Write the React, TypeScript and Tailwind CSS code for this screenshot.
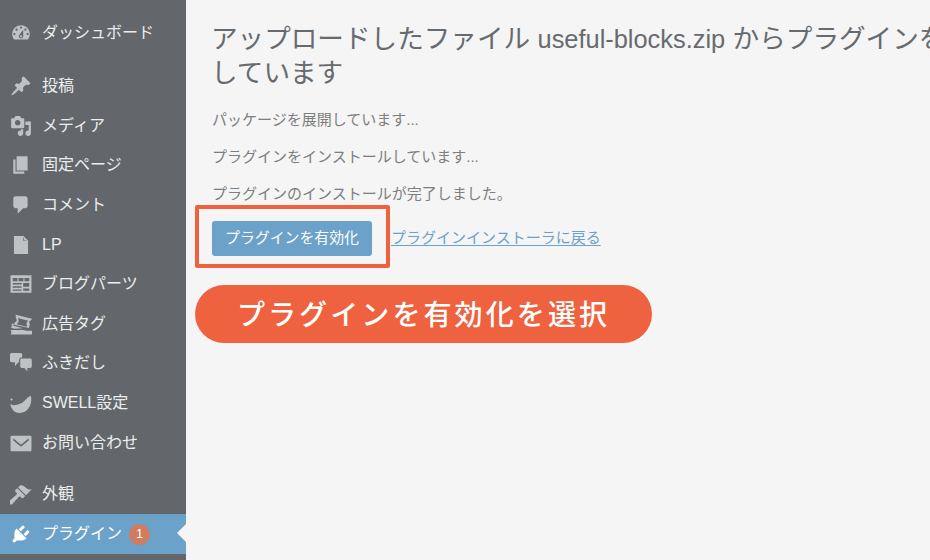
const jpFont = "font-['Liberation_Sans','Noto_Sans_CJK_JP',sans-serif]";

const icons: Record<string, React.ReactNode> = {
  dashboard: (
    <path d="M3.76 16h12.48c1.1-1.37 1.76-3.11 1.76-5 0-4.42-3.58-8-8-8s-8 3.58-8 8c0 1.89.66 3.63 1.76 5zM10 4c.55 0 1 .45 1 1s-.45 1-1 1-1-.45-1-1 .45-1 1-1zM6 6c.55 0 1 .45 1 1s-.45 1-1 1-1-.45-1-1 .45-1 1-1zm8 0c.55 0 1 .45 1 1s-.45 1-1 1-1-.45-1-1 .45-1 1-1zm-5.37 5.55L12 7v6c0 1.1-.9 2-2 2s-2-.9-2-2c0-.57.24-1.08.63-1.45zM4 10c.55 0 1 .45 1 1s-.45 1-1 1-1-.45-1-1 .45-1 1-1zm12 0c.55 0 1 .45 1 1s-.45 1-1 1-1-.45-1-1 .45-1 1-1zm-5 3c0-.55-.45-1-1-1s-1 .45-1 1 .45 1 1 1 1-.45 1-1z" />
  ),
  post: (
    <path d="M10.44 3.02l1.82-1.82 6.36 6.35-1.83 1.82c-1.05-.68-2.48-.57-3.41.36l-.75.75c-.92.93-1.04 2.35-.35 3.41l-1.83 1.82-2.41-2.41-2.8 2.79c-.42.42-3.38 2.71-3.8 2.29s1.86-3.39 2.28-3.81l2.79-2.79L4.1 9.36l1.83-1.82c1.05.69 2.48.57 3.4-.36l.75-.75c.93-.92 1.05-2.35.36-3.41z" />
  ),
  media: (
    <path d="M13 11V4c0-.55-.45-1-1-1h-1.67L9 1H5L3.67 3H2c-.55 0-1 .45-1 1v7c0 .55.45 1 1 1h10c.55 0 1-.45 1-1zM7 4.5c1.38 0 2.5 1.12 2.5 2.5S8.38 9.5 7 9.5 4.5 8.38 4.5 7 5.62 4.5 7 4.5zM14 6h5v10.5c0 1.38-1.12 2.5-2.5 2.5S14 17.88 14 16.5s1.12-2.5 2.5-2.5c.17 0 .34.02.5.05V9h-3V6zm-4 8.05V13h2v3.5c0 1.38-1.12 2.5-2.5 2.5S7 17.88 7 16.5 8.12 14 9.5 14c.17 0 .34.02.5.05z" />
  ),
  page: <path d="M6 15V2h10v13H6zm-1 1h8v2H3V5h2v11z" />,
  comment: (
    <path d="M5 2h9c1.1 0 2 .9 2 2v7c0 1.1-.9 2-2 2h-2l-5 5v-5H5c-1.1 0-2-.9-2-2V4c0-1.1.9-2 2-2z" />
  ),
  doc: <path fillRule="evenodd" d="M3.600 1.800h8.600l4.200 4.200v12.200H3.600V1.800zm8.400 1.200v3.200h3.200l-.6-.6H12.600V3.600z" />,
  parts: (
    <path
      fillRule="evenodd"
      d="M.5 2h19v16H.5V2zm2 2.500v3h4.300v-3H2.500zm5.300 0v3h4.400v-3H7.800zm5.400 0v3h4.300v-3h-4.300zM2.500 9v1.500h8V9h-8zm0 3v1.500h8V12h-8zm0 3v1.200h8V15h-8zm9.500-6v3.500h5.500V9H12zm0 5v2.200h5.500V14H12z"
    />
  ),
  ticket: (
    <>
      <path
        fillRule="evenodd"
        d="M5.200 1.500l14.800 3.700-.8 1.300c-.9.100-1.500.6-1.700 1.400-.2.800 0 1.500.6 2.100l-.9 3.700L3.700 10.700l.6-2.300c.8-.1 1.500-.6 1.700-1.500.2-.8-.1-1.500-.7-2.100l-.1-3.300zm2 3l.2 1c.4.800.6 1.500.3 2.500-.2.900-.8 1.600-1.600 1.900l-.1.300 9.200 2.300.2-.8c-.4-.8-.5-1.600-.3-2.500.2-.9.700-1.600 1.400-1.900l.1-.3-9.600-2.500z"
      />
      <path d="M1.500 9.500l2 .5-.4 1.600 8.500 2.300-7.500.4-3.400-.9c.5-.3.800-.8.900-1.400.1-.5.100-1-.1-1.500zM.5 15.500h11.500l3 .6 5 0v3.400H.5c.5-.5.7-1.100.7-1.900 0-.8-.2-1.500-.7-2.100z" />
    </>
  ),
  bubbles: (
    <>
      <path d="M1.500.800h8c.9 0 1.500.6 1.500 1.500v5.500c0 .9-.6 1.500-1.500 1.500H7.500L4.500 13V9.300h-3C.6 9.300 0 8.700 0 7.800V2.300C0 1.400.6.800 1.500.800z" />
      <path
        stroke="#63676b"
        strokeWidth="1"
        d="M10.500 5.500h8c.9 0 1.800.8 1.800 1.700v6c0 .9-.9 1.800-1.800 1.800h-2.200v4l-3.500-4h-2.300c-.9 0-1.700-.9-1.700-1.800v-6c0-.9.800-1.700 1.700-1.700z"
      />
    </>
  ),
  swell: (
    <>
      <path d="M19 3.500C20.500 10 17 19 9 19 4.500 19 1 16 .3 10.800c2 1.300 4 1.500 6 .8 2.300-.8 3.500-.7 5.200-2 3-2.300 4-4.800 7.500-6.100z" />
      <circle cx="1.400" cy="6.800" r="1" />
    </>
  ),
  mail: (
    <path
      fillRule="evenodd"
      d="M1.500 3.500h17c.5 0 1 .5 1 1v12c0 .5-.5 1-1 1h-17c-.5 0-1-.5-1-1v-12c0-.5.5-1 1-1zM3 5.700l7 5.800 7-5.800v2l-7 5.800-7-5.800v-2z"
    />
  ),
  appearance: (
    <path d="M14.480 11.060L7.410 3.990l1.500-1.500c.5-.56 2.300-.47 3.510.32 1.210.8 1.430 1.280 2.910 2.100 1.180.64 2.450 1.260 4.450.85zm-.71.71L6.700 4.700 4.930 6.470c-.39.39-.39 1.020 0 1.410l1.060 1.060c.39.39.39 1.030 0 1.420-.6.6-6.480 5.820-6.480 5.820-.78.7-.78 2.050 0 2.830.78.78 2.130.78 2.830 0 0 0 5.220-5.880 5.820-6.480.39-.39 1.030-.39 1.420 0l1.060 1.060c.39.39 1.020.39 1.410 0z" />
  ),
  plugin: (
    <path d="M13.110 4.360L9.870 7.600 8 5.730l3.240-3.240c.35-.34 1.050-.2 1.560.32.52.51.66 1.210.31 1.550zm-8 1.770l.91-1.120 9.010 9.010-1.190.84c-.71.71-2.630 1.160-3.820 1.160H6.140L4.900 17.260c-.59.59-1.540.59-2.120 0-.59-.58-.59-1.530 0-2.120l1.240-1.240v-3.880c0-1.130.4-3.190 1.090-3.890zm7.260 3.970l3.240-3.240c.34-.35 1.040-.21 1.550.31.52.51.66 1.210.31 1.550l-3.240 3.250z" />
  ),
};

const topItems = [{ icon: "dashboard", label: "ダッシュボード" }];

const contentItems = [
  { icon: "post", label: "投稿" },
  { icon: "media", label: "メディア" },
  { icon: "page", label: "固定ページ" },
  { icon: "comment", label: "コメント" },
  { icon: "doc", label: "LP" },
  { icon: "parts", label: "ブログパーツ" },
  { icon: "ticket", label: "広告タグ" },
  { icon: "bubbles", label: "ふきだし" },
  { icon: "swell", label: "SWELL設定" },
  { icon: "mail", label: "お問い合わせ" },
];

const MenuRow = ({ icon, label }: { icon: string; label: string }) => (
  <div className="flex h-[39.6px] items-center text-[#eceded]">
    <span className="flex w-[42px] justify-center">
      <svg viewBox="0 0 20 20" className="h-[22px] w-[22px] fill-[#bfc2c5]">
        {icons[icon]}
      </svg>
    </span>
    <span className="text-[16px]">{label}</span>
  </div>
);

const Sidebar = () => (
  <aside className="flex h-full w-[186px] shrink-0 flex-col bg-[#63676b] pt-[13.5px]">
    <div className="mb-[13.4px]">
      {topItems.map((item) => (
        <MenuRow key={item.label} icon={item.icon} label={item.label} />
      ))}
    </div>
    <div className="mb-[12.2px]">
      {contentItems.map((item) => (
        <MenuRow key={item.label} icon={item.icon} label={item.label} />
      ))}
    </div>
    <MenuRow icon="appearance" label="外観" />
    {/* current item */}
    <div className="relative flex h-[39.6px] items-center bg-[#6ca2ca] text-white">
      <span className="flex w-[42px] justify-center">
        <svg viewBox="0 0 20 20" className="h-[22px] w-[22px] fill-white">
          {icons.plugin}
        </svg>
      </span>
      <span className="text-[16px]">プラグイン</span>
      <span className="ml-[7px] flex h-[21px] w-[21px] items-center justify-center rounded-full bg-[#d17b5f] text-[12px]">
        1
      </span>
      <span className="absolute right-0 top-[10px] h-0 w-0 border-y-[9px] border-r-[9px] border-y-transparent border-r-[#f5f5f5]" />
    </div>
  </aside>
);

export default function App() {
  return (
    <div className={`flex h-[560px] w-[930px] overflow-hidden bg-[#f5f5f5] ${jpFont}`}>
      <Sidebar />
      <main className="min-w-0 flex-1 pl-[9px]">
        <div className="pl-[17px]">
          <h1 className="-ml-px pt-[22px] whitespace-nowrap text-[26.6px] leading-[34px] text-[#676b6f]">
            アップロードしたファイル <span className="text-[25.4px]">useful-blocks.zip</span> からプラグインをインストール
            <br />
            しています
          </h1>
          <div className="mt-[19px] flex flex-col gap-[16px] text-[15px] leading-[21px] text-[#7c7e80]">
            <p>パッケージを展開しています...</p>
            <p>プラグインをインストールしています...</p>
            <p>プラグインのインストールが完了しました。</p>
          </div>
        </div>
        <div className="mt-px flex items-center">
          <div className="h-[63px] w-[195px] rounded-[2px] border-[4px] border-[#ee6240] pl-[13px] pt-[12px]">
            <button className="flex h-[35px] w-[160px] items-center justify-center rounded-[3px] bg-[#6ca2ca] text-[14.9px] text-white">
              プラグインを有効化
            </button>
          </div>
          <a className="ml-px mt-[3px] text-[15px] text-[#6ca2ca] underline underline-offset-2">
            プラグインインストーラに戻る
          </a>
        </div>
        <div className="mt-[17px] flex h-[58px] w-[457px] items-center justify-center rounded-full bg-[#ee6240] pt-[3px] text-[28px] font-medium tracking-[3.1px] text-white">
          プラグインを有効化を選択
        </div>
      </main>
    </div>
  );
}
